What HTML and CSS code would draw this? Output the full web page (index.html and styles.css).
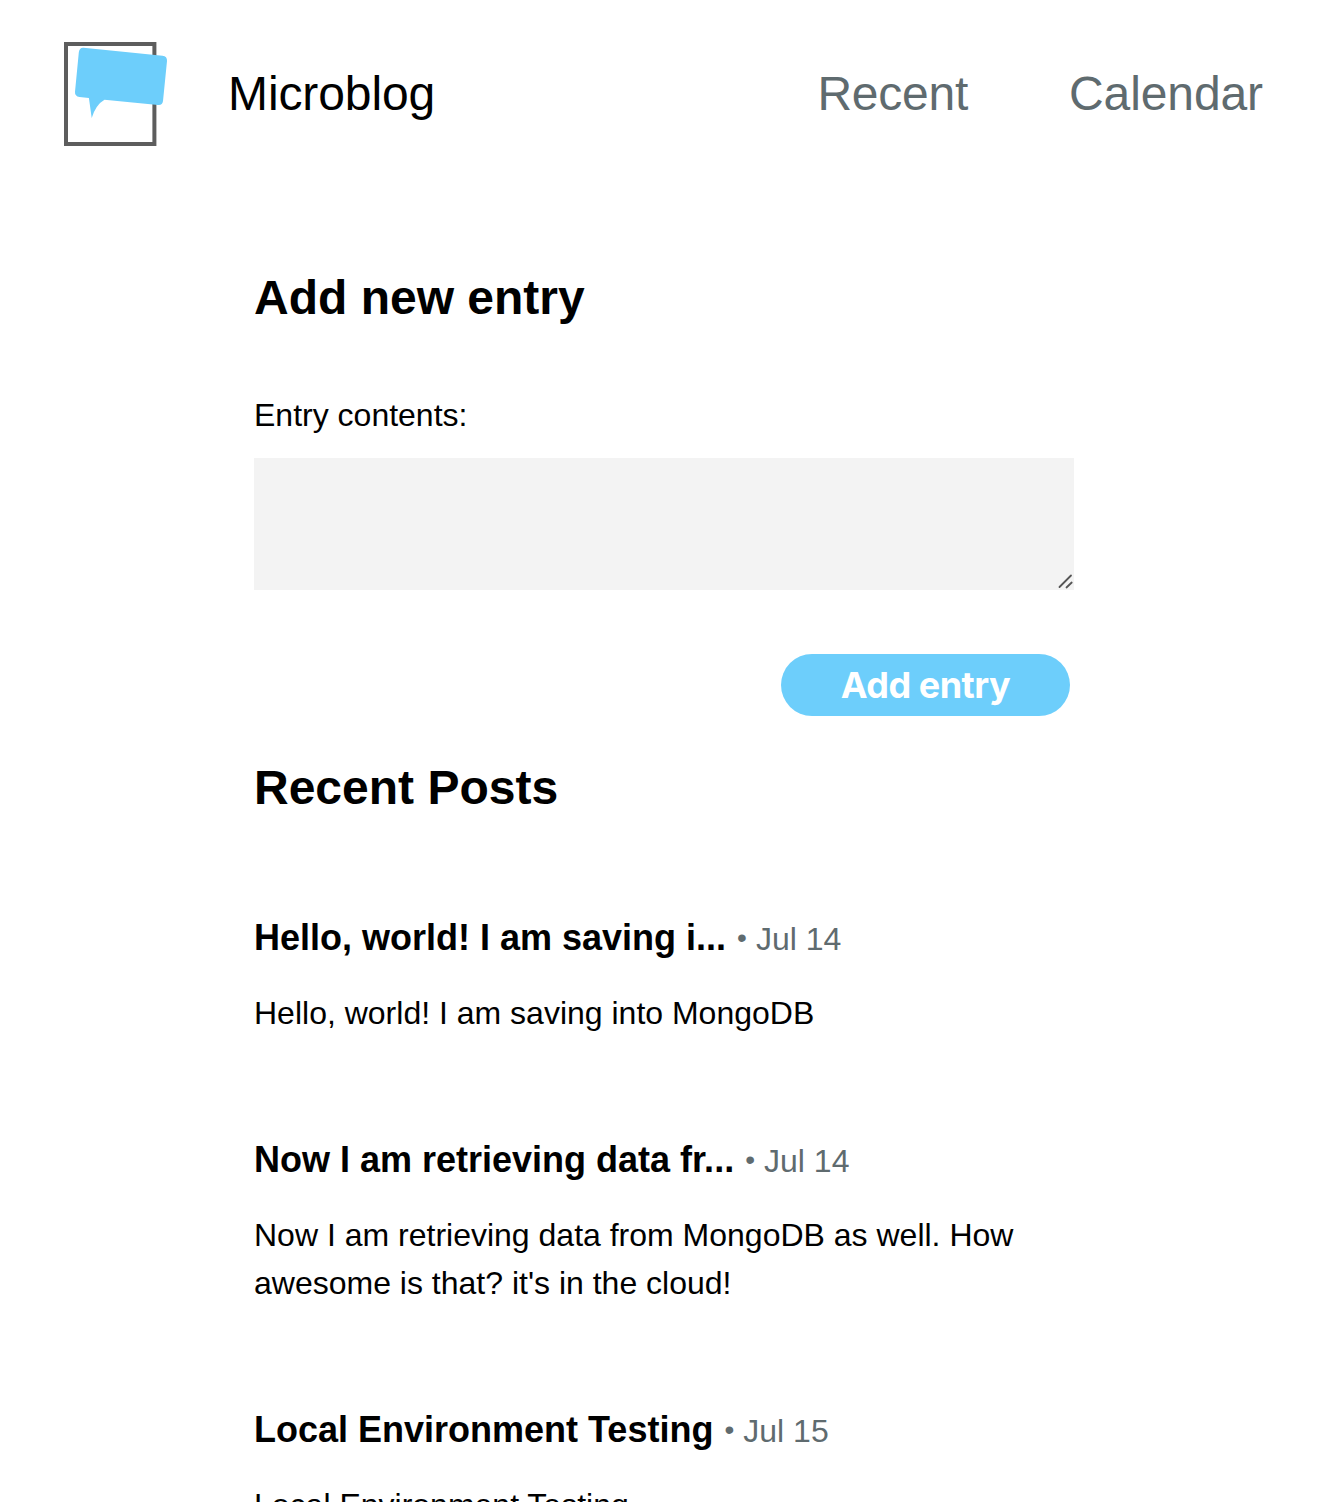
FILE: index.html
```html
<!DOCTYPE html>
<html lang="en">
<head>
<meta charset="utf-8">
<title>Microblog</title>
<link rel="stylesheet" href="styles.css">
</head>
<body>
<header class="header">
  <svg class="logo" viewBox="0 0 104 104" aria-hidden="true">
    <rect x="2" y="2" width="88.400" height="100" fill="none" stroke="#5d5d5d" stroke-width="4"/>
    <path d="M19.500 5.800 L98.500 13.700 Q103.300 14.300 103 19 L99 59 Q98.400 63.500 94 63 L40.500 57.800 Q32 62.500 27.700 76 L24.900 56 L15.500 54.900 Q10.700 54.300 11 49.700 L14.800 10.500 Q15.300 5.500 19.500 5.800 Z" fill="#6dcefb"/>
  </svg>
  <span class="brand">Microblog</span>
  <nav class="nav">
    <a class="nav-link nav-recent" href="#">Recent</a>
    <a class="nav-link" href="#">Calendar</a>
  </nav>
</header>
<main class="main">
  <h1 class="heading">Add new entry</h1>
  <form class="form">
    <label class="label" for="content">Entry contents:</label>
    <div class="field">
      <textarea class="textarea" id="content"></textarea>
      <svg class="grip" viewBox="0 0 16 16" aria-hidden="true"><path d="M1.500 14L13 2.500M8.500 14.500L13.700 9.500" stroke="#555" stroke-width="1.800" stroke-linecap="round" fill="none"/></svg>
    </div>
    <button class="button" type="button">Add entry</button>
  </form>
  <h1 class="heading heading-recent">Recent Posts</h1>
  <article class="entry">
    <div class="entry-head"><h2 class="entry-title">Hello, world! I am saving i...</h2><time class="date"><span class="dot">•</span> Jul 14</time></div>
    <p class="entry-text">Hello, world! I am saving into MongoDB</p>
  </article>
  <article class="entry">
    <div class="entry-head"><h2 class="entry-title">Now I am retrieving data fr...</h2><time class="date"><span class="dot">•</span> Jul 14</time></div>
    <p class="entry-text">Now I am retrieving data from MongoDB as well. How awesome is that? it's in the cloud!</p>
  </article>
  <article class="entry">
    <div class="entry-head"><h2 class="entry-title">Local Environment Testing</h2><time class="date"><span class="dot">•</span> Jul 15</time></div>
    <p class="entry-text">Local Environment Testing</p>
  </article>
</main>
</body>
</html>
```
FILE: styles.css
```css
* { box-sizing: border-box; }
html, body { height: 1502px; overflow: hidden; }
body { margin: 0; background: #fff; color: #000; font: 32px/48px "Liberation Sans", Arial, sans-serif; }
.header { display: flex; align-items: center; height: 104px; margin: 42px 57px 0 64px; }
.logo { width: 104px; height: 104px; flex: none; }
.brand { margin-left: 60px; font-size: 48px; letter-spacing: -0.1px; }
.nav { display: flex; gap: 101px; margin-left: auto; font-size: 48px; }
.nav-link { color: #5f6b6f; text-decoration: none; letter-spacing: -0.1px; }
.nav-recent { letter-spacing: -0.25px; }
.main { width: 820px; margin: 116px 0 0 254px; }
.heading { margin: 0; font-size: 48px; line-height: 72px; }
.form { display: flex; flex-direction: column; }
.label { margin-top: 57px; }
.field { position: relative; height: 132px; margin-top: 19px; }
.textarea { display: block; width: 820px; height: 132px; border: 0; padding: 16px; background: #f3f3f3; resize: none; font: inherit; }
.grip { position: absolute; right: 0; bottom: 1px; width: 16px; height: 16px; }
.button { align-self: flex-end; width: 289px; height: 62px; margin: 64px 4px 0 0; padding: 0; border: 0; border-radius: 31px; background: #6dcefb; color: #fff; font: bold 36px/62px Inter, sans-serif; letter-spacing: -0.5px; }
.heading-recent { margin-top: 36px; margin-bottom: 87px; }
.entry { margin-bottom: 96px; }
.entry-head { display: flex; align-items: baseline; gap: 11px; height: 54px; }
.entry-title { margin: 0; font-size: 36px; line-height: 54px; white-space: nowrap; }
.date { color: #5f6b6f; white-space: nowrap; }
.dot { display: inline-block; width: 10px; font-size: 28px; line-height: 1; vertical-align: 3px; }
.entry-text { margin: 24px 0 0; }
```
